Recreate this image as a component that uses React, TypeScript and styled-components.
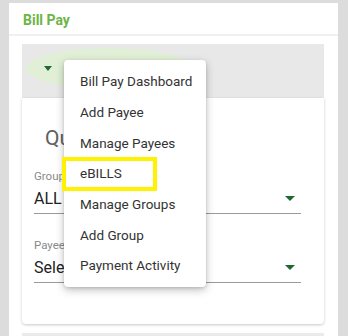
import React from "react";
import styled, { createGlobalStyle } from "styled-components";

const Global = createGlobalStyle`
  html, body { margin: 0; padding: 0; }
  body {
    background: #dcdcdc;
    width: 348px;
    height: 336px;
    overflow: hidden;
    font-family: Roboto, "Noto Sans", Arial, sans-serif;
  }
`;

const Page = styled.div`
  position: relative;
  width: 348px;
  height: 336px;
  padding: 3px 10px 0 9px;
  box-sizing: border-box;
`;

const Panel = styled.div`
  background: #fff;
  height: 333px;
  overflow: hidden;
  display: flex;
  flex-direction: column;
`;

const Header = styled.div`
  flex-shrink: 0;
  height: 29px;
  padding: 2px 0 0 14px;
  display: flex;
  align-items: center;
  border-bottom: 2px solid #f0f0f0;
  color: #6cb545;
  font-weight: 700;
  font-size: 14px;
`;

const Body = styled.div`
  flex-shrink: 0;
  padding: 8px 14px 0 13px;
  display: flex;
  flex-direction: column;
`;

const ToolBar = styled.div`
  flex-shrink: 0;
  height: 54px;
  background: #e8e8e8;
  padding: 4px 0 0 4px;
  box-sizing: border-box;
`;

const Ripple = styled.div`
  width: 166px;
  height: 41px;
  border-radius: 50%;
  background: #e1efd6;
  display: flex;
  align-items: center;
  padding-left: 18px;
  box-sizing: border-box;
`;

const Caret = styled.span<{ $w?: number }>`
  width: 0;
  height: 0;
  border-left: ${(p) => (p.$w ?? 9) / 2}px solid transparent;
  border-right: ${(p) => (p.$w ?? 9) / 2}px solid transparent;
  border-top: 5px solid #1c6a31;
`;

const Card = styled.div`
  flex-shrink: 0;
  height: 226px;
  background: #fff;
  border-radius: 0 0 4px 4px;
  box-shadow: 0 1px 3px rgba(0, 0, 0, 0.22);
  padding: 28px 23px 0 12px;
  box-sizing: border-box;
  display: flex;
  flex-direction: column;
`;

const Title = styled.div`
  font-size: 21px;
  line-height: 24px;
  color: #606060;
  margin-left: 11px;
  margin-bottom: 19px;
`;

const Field = styled.div`
  display: flex;
  flex-direction: column;
  margin-bottom: 24px;
`;

const Label = styled.div`
  font-size: 11.5px;
  line-height: 14px;
  color: #8a8a8a;
`;

const ValueRow = styled.div`
  display: flex;
  align-items: center;
  justify-content: space-between;
  height: 30px;
  border-bottom: 1px solid #9a9a9a;
  padding-right: 6px;
  font-size: 16px;
  color: #222;
`;

const NextBar = styled.div`
  flex-shrink: 0;
  height: 8px;
  margin-top: 9px;
  background: #ebebeb;
`;

const Menu = styled.ul`
  position: absolute;
  left: 64px;
  top: 60px;
  width: 142px;
  margin: 0;
  padding: 6px 0;
  list-style: none;
  background: #fff;
  border-radius: 4px;
  box-shadow: 0 3px 8px rgba(0, 0, 0, 0.25), 0 1px 3px rgba(0, 0, 0, 0.12);
`;

const MenuItem = styled.li`
  height: 30.7px;
  display: flex;
  align-items: center;
  padding-left: 16px;
  font-size: 13.5px;
  color: #333;
  white-space: nowrap;
`;

const Highlight = styled.div`
  position: absolute;
  left: 62px;
  top: 157px;
  width: 95px;
  height: 34px;
  border: 4px solid #fff200;
  box-sizing: border-box;
`;

const items = [
  "Bill Pay Dashboard",
  "Add Payee",
  "Manage Payees",
  "eBILLS",
  "Manage Groups",
  "Add Group",
  "Payment Activity",
];

export default function App() {
  return (
    <Page>
      <Global />
      <Panel>
        <Header>Bill Pay</Header>
        <Body>
          <ToolBar>
            <Ripple>
              <Caret />
            </Ripple>
          </ToolBar>
          <Card>
            <Title>Quick Pay</Title>
            <Field>
              <Label>Group</Label>
              <ValueRow>
                <span>ALL</span>
                <Caret $w={10} />
              </ValueRow>
            </Field>
            <Field>
              <Label>Payee</Label>
              <ValueRow>
                <span>Select Payee</span>
                <Caret $w={10} />
              </ValueRow>
            </Field>
          </Card>
          <NextBar />
        </Body>
      </Panel>
      <Menu>
        {items.map((t) => (
          <MenuItem key={t}>{t}</MenuItem>
        ))}
      </Menu>
      <Highlight />
    </Page>
  );
}
